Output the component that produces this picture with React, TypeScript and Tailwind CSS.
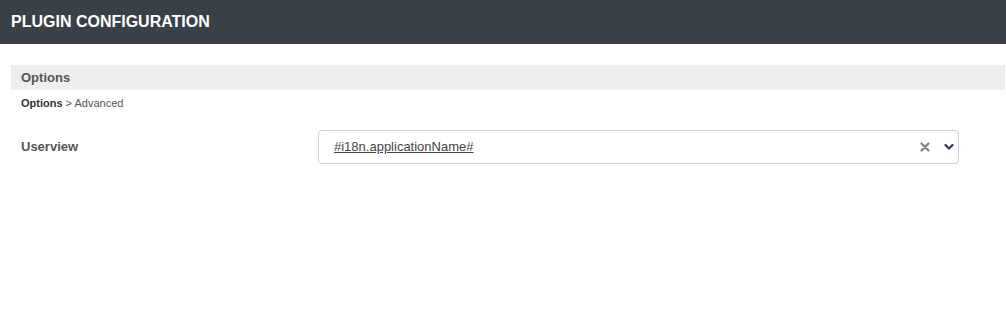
import React from "react";

export default function App() {
  return (
    <div className="w-[1006px] h-[329px] bg-white font-['Liberation_Sans',Arial,sans-serif] overflow-hidden">
      {/* Header */}
      <div className="h-[44px] bg-[#394048] flex items-center px-[11px]">
        <h1 className="text-white font-bold text-[16px]">PLUGIN CONFIGURATION</h1>
      </div>

      <div className="pt-[21px] pl-[11px] pr-[1px]">
        {/* Section bar */}
        <div className="h-[25px] bg-[#eeeeee] flex items-center px-[10px]">
          <span className="text-[13px] font-bold text-[#555555]">Options</span>
        </div>

        {/* Breadcrumb */}
        <div className="px-[10px] pt-[7px] text-[11px] leading-[13px] text-[#555555]">
          <span className="font-bold text-[#333333]">Options</span>
          <span> &gt; Advanced</span>
        </div>

        {/* Field row */}
        <div className="flex items-center mt-[20px] pl-[10px]">
          <label className="w-[297px] text-[13px] font-bold text-[#555555]">Userview</label>
          <div className="w-[641px] h-[34px] border border-[#cfd2da] rounded-[4px] flex items-center pl-[15px] pr-[4px]">
            <span className="flex-1 text-[13px] text-[#444444] underline underline-offset-[1px]">#i18n.applicationName#</span>
            <svg width="10" height="10" viewBox="0 0 10 10" className="mr-[14px]">
              <path d="M1.5 1.5 L8.5 8.5 M8.5 1.5 L1.5 8.5" stroke="#808080" strokeWidth="2.2" strokeLinecap="round" />
            </svg>
            <svg width="10" height="8" viewBox="0 0 10 8">
              <path d="M1.5 2 L5 5.5 L8.5 2" stroke="#2c3e50" strokeWidth="2.2" fill="none" strokeLinecap="round" strokeLinejoin="round" />
            </svg>
          </div>
        </div>
      </div>
    </div>
  );
}
